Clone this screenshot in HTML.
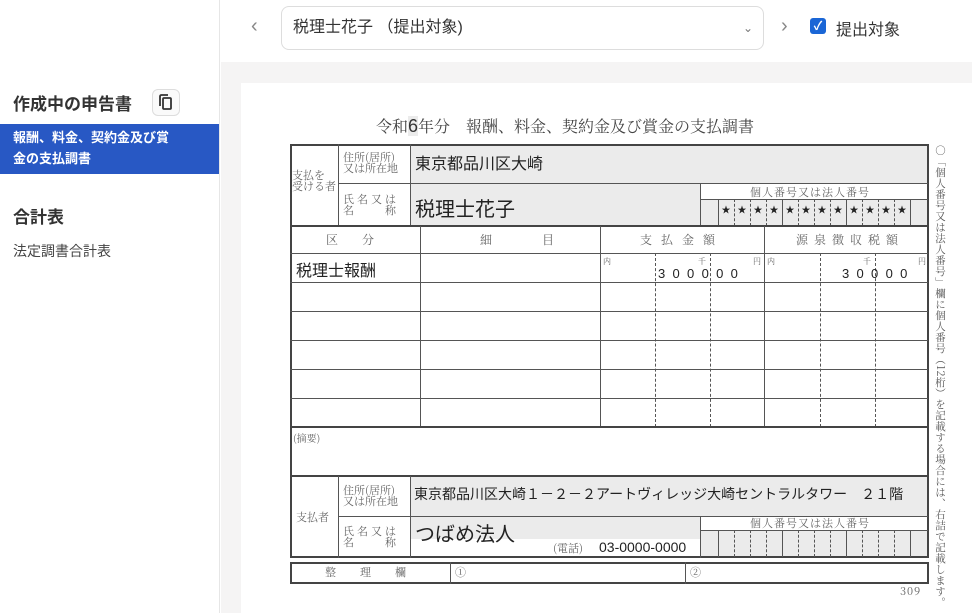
<!DOCTYPE html><html><head><meta charset="utf-8"><style>
*{box-sizing:border-box;margin:0;padding:0}
body{width:972px;height:613px;overflow:hidden;background:#fff;font-family:"Liberation Sans","Noto Sans CJK JP",sans-serif;position:relative;color:#222}
.a{position:absolute}
.hl{position:absolute;height:1px;background:#555}
.vl{position:absolute;width:1px;background:#555}
.g{position:absolute;background:#ebebeb}
.s{font-family:"Noto Serif CJK SC","Liberation Serif",serif;color:#666;font-size:11px;line-height:11px}
.dv{position:absolute;width:0;border-left:1px dashed #555}
</style></head><body>
<div class="a" style="left:0;top:0;width:220px;height:613px;background:#fff;border-right:1px solid #e6e6e6"></div>
<div class="a" style="left:13px;top:90px;font-size:17px;font-weight:bold;color:#333">作成中の申告書</div>
<div class="a" style="left:152px;top:89px;width:28px;height:27px;border:1px solid #ddd;border-radius:6px;background:#fafafa">
<svg width="26" height="25" viewBox="0 0 26 25"><rect x="10" y="8" width="8" height="11" rx="1" fill="none" stroke="#333" stroke-width="1.8"/><path d="M7 16V6.5Q7 5 8.5 5H15" fill="none" stroke="#333" stroke-width="1.8"/></svg></div>
<div class="a" style="left:0;top:124px;width:219px;height:50px;background:#2858c4;color:#fff;font-size:13px;font-weight:bold;line-height:21px;padding:3px 13px">報酬、料金、契約金及び賞<br>金の支払調書</div>
<div class="a" style="left:13px;top:203px;font-size:17px;font-weight:bold;color:#333">合計表</div>
<div class="a" style="left:13px;top:241px;font-size:14px;color:#444">法定調書合計表</div>
<div class="a" style="left:221px;top:62px;width:751px;height:551px;background:#f5f4f4"></div>
<div class="a" style="left:251px;top:15px;font-size:20px;color:#888">‹</div>
<div class="a" style="left:281px;top:6px;width:483px;height:44px;border:1px solid #ddd;border-radius:8px;background:#fff;font-size:16px;line-height:42px;padding-left:11px;color:#333">税理士花子 （提出対象)<span style="position:absolute;right:10px;top:0;color:#777;font-size:12px">⌄</span></div>
<div class="a" style="left:781px;top:15px;font-size:20px;color:#888">›</div>
<div class="a" style="left:810px;top:18px;width:16px;height:16px;background:#1a66d6;border-radius:3px;color:#fff;font-size:12px;line-height:16px;text-align:center;font-weight:bold">✓</div>
<div class="a" style="left:836px;top:16px;font-size:16px;color:#333">提出対象</div>
<div class="a" style="left:241px;top:83px;width:731px;height:530px;background:#fff"></div>
<div class="a s" style="left:376px;top:117px;font-size:16px;line-height:18px;color:#444">令和<span style="background:#ebebeb;font-family:'Liberation Sans',sans-serif;font-size:18px;color:#333">6</span>年分　報酬、料金、契約金及び賞金の支払調書</div>
<!-- main box -->
<div class="a" style="left:290px;top:144px;width:639px;height:414px;border:2px solid #444"></div>
<div class="g" style="left:411px;top:146px;width:516px;height:37px"></div>
<div class="g" style="left:411px;top:184px;width:289px;height:41px"></div>
<div class="g" style="left:701px;top:200px;width:226px;height:25px"></div>
<div class="vl" style="left:338px;top:144px;height:82px"></div>
<div class="vl" style="left:410px;top:144px;height:82px"></div>
<div class="hl" style="left:338px;top:183px;width:590px"></div>
<div class="vl" style="left:700px;top:183px;height:43px"></div>
<div class="hl" style="left:700px;top:199px;width:228px"></div>
<div class="a s" style="left:292px;top:170px;">支払を<br>受ける者</div>
<div class="a s" style="left:343px;top:152px;">住所(居所)<br>又は所在地</div>
<div class="a s" style="left:343px;top:194px;letter-spacing:3px">氏名又は<br>名　　称</div>
<div class="a" style="left:415px;top:150px;font-size:16px">東京都品川区大崎</div>
<div class="a" style="left:415px;top:193px;font-size:20px">税理士花子</div>
<div class="a s" style="left:750px;top:187px;letter-spacing:1px">個人番号又は法人番号</div>
<div class="a" style="left:718px;top:203px;font-size:9px;letter-spacing:0;word-spacing:0;display:flex">
<span style="display:inline-block;width:16px;text-align:center">★</span><span style="display:inline-block;width:16px;text-align:center">★</span><span style="display:inline-block;width:16px;text-align:center">★</span><span style="display:inline-block;width:16px;text-align:center">★</span><span style="display:inline-block;width:16px;text-align:center">★</span><span style="display:inline-block;width:16px;text-align:center">★</span><span style="display:inline-block;width:16px;text-align:center">★</span><span style="display:inline-block;width:16px;text-align:center">★</span><span style="display:inline-block;width:16px;text-align:center">★</span><span style="display:inline-block;width:16px;text-align:center">★</span><span style="display:inline-block;width:16px;text-align:center">★</span><span style="display:inline-block;width:16px;text-align:center">★</span></div>
<div class="vl" style="left:718px;top:199px;height:27px"></div>
<div class="vl" style="left:782px;top:199px;height:27px"></div>
<div class="vl" style="left:846px;top:199px;height:27px"></div>
<div class="vl" style="left:910px;top:199px;height:27px"></div>
<div class="dv" style="left:734px;top:199px;height:27px"></div><div class="dv" style="left:750px;top:199px;height:27px"></div><div class="dv" style="left:766px;top:199px;height:27px"></div>
<div class="dv" style="left:798px;top:199px;height:27px"></div><div class="dv" style="left:814px;top:199px;height:27px"></div><div class="dv" style="left:830px;top:199px;height:27px"></div>
<div class="dv" style="left:862px;top:199px;height:27px"></div><div class="dv" style="left:878px;top:199px;height:27px"></div><div class="dv" style="left:894px;top:199px;height:27px"></div>
<!-- item block -->
<div class="a" style="left:290px;top:225px;width:639px;height:2px;background:#444"></div>
<div class="hl" style="left:290px;top:253px;width:638px"></div>
<div class="hl" style="left:290px;top:282px;width:638px"></div>
<div class="hl" style="left:290px;top:311px;width:638px"></div>
<div class="hl" style="left:290px;top:340px;width:638px"></div>
<div class="hl" style="left:290px;top:369px;width:638px"></div>
<div class="hl" style="left:290px;top:398px;width:638px"></div>
<div class="vl" style="left:420px;top:226px;height:201px"></div>
<div class="vl" style="left:600px;top:226px;height:201px"></div>
<div class="vl" style="left:764px;top:226px;height:201px"></div>
<div class="dv" style="left:655px;top:253px;height:174px"></div><div class="dv" style="left:710px;top:253px;height:174px"></div>
<div class="dv" style="left:820px;top:253px;height:174px"></div><div class="dv" style="left:875px;top:253px;height:174px"></div>
<div class="a s" style="left:326px;top:234px;font-size:12px;letter-spacing:24px">区分</div>
<div class="a s" style="left:480px;top:234px;font-size:12px;letter-spacing:50px">細目</div>
<div class="a s" style="left:640px;top:234px;font-size:12px;letter-spacing:9px">支払金額</div>
<div class="a s" style="left:796px;top:234px;font-size:12px;letter-spacing:6px">源泉徴収税額</div>
<div class="a" style="left:296px;top:257px;font-size:16px">税理士報酬</div>
<div class="a s" style="left:603px;top:256px;font-size:8px">内</div>
<div class="a s" style="left:698px;top:256px;font-size:8px">千</div>
<div class="a s" style="left:753px;top:256px;font-size:8px">円</div>
<div class="a s" style="left:767px;top:256px;font-size:8px">内</div>
<div class="a s" style="left:863px;top:256px;font-size:8px">千</div>
<div class="a s" style="left:918px;top:256px;font-size:8px">円</div>
<div class="a" style="left:658px;top:266px;font-size:13px;letter-spacing:7.3px;font-family:'Liberation Sans',sans-serif">300000</div>
<div class="a" style="left:842px;top:266px;font-size:13px;letter-spacing:7.3px;font-family:'Liberation Sans',sans-serif">30000</div>
<div class="a" style="left:290px;top:426px;width:639px;height:2px;background:#444"></div>
<div class="a s" style="left:293px;top:432px;font-size:10px">(摘要)</div>
<div class="a" style="left:290px;top:475px;width:639px;height:2px;background:#444"></div>
<!-- payer -->
<div class="g" style="left:411px;top:477px;width:516px;height:39px"></div>
<div class="g" style="left:411px;top:517px;width:289px;height:22px"></div>
<div class="g" style="left:701px;top:531px;width:226px;height:25px"></div>
<div class="vl" style="left:338px;top:476px;height:82px"></div>
<div class="vl" style="left:410px;top:476px;height:82px"></div>
<div class="hl" style="left:338px;top:516px;width:590px"></div>
<div class="vl" style="left:700px;top:516px;height:42px"></div>
<div class="hl" style="left:700px;top:530px;width:228px"></div>
<div class="vl" style="left:718px;top:530px;height:27px"></div><div class="vl" style="left:782px;top:530px;height:27px"></div><div class="vl" style="left:846px;top:530px;height:27px"></div><div class="vl" style="left:910px;top:530px;height:27px"></div>
<div class="dv" style="left:734px;top:530px;height:27px"></div><div class="dv" style="left:750px;top:530px;height:27px"></div><div class="dv" style="left:766px;top:530px;height:27px"></div>
<div class="dv" style="left:798px;top:530px;height:27px"></div><div class="dv" style="left:814px;top:530px;height:27px"></div><div class="dv" style="left:830px;top:530px;height:27px"></div>
<div class="dv" style="left:862px;top:530px;height:27px"></div><div class="dv" style="left:878px;top:530px;height:27px"></div><div class="dv" style="left:894px;top:530px;height:27px"></div>
<div class="a s" style="left:296px;top:512px;">支払者</div>
<div class="a s" style="left:343px;top:485px;">住所(居所)<br>又は所在地</div>
<div class="a s" style="left:343px;top:526px;letter-spacing:3px">氏名又は<br>名　　称</div>
<div class="a" style="left:414px;top:484px;font-size:14px;white-space:nowrap">東京都品川区大崎１－２－２アートヴィレッジ大崎セントラルタワー　２１階</div>
<div class="a" style="left:415px;top:518px;font-size:20px">つばめ法人</div>
<div class="a s" style="left:553px;top:543px;">(電話)</div>
<div class="a" style="left:599px;top:539px;font-size:14px">03-0000-0000</div>
<div class="a s" style="left:750px;top:518px;letter-spacing:1px">個人番号又は法人番号</div>
<!-- bottom -->
<div class="a" style="left:290px;top:562px;width:639px;height:22px;border:2px solid #444"></div>
<div class="vl" style="left:450px;top:562px;height:22px"></div>
<div class="vl" style="left:685px;top:562px;height:22px"></div>
<div class="a s" style="left:325px;top:567px;font-size:11px;letter-spacing:24px">整理欄</div>
<div class="a s" style="left:455px;top:567px;">①</div>
<div class="a s" style="left:690px;top:567px;">②</div>
<div class="a s" style="left:900px;top:586px;font-size:11px;letter-spacing:1px">309</div>
<div class="a s" style="left:934px;top:145px;writing-mode:vertical-rl;font-size:10.5px;line-height:12px;letter-spacing:0.5px;color:#555">○「個人番号又は法人番号」欄に個人番号（12桁）を記載する場合には、右詰で記載します。</div>
</body></html>
